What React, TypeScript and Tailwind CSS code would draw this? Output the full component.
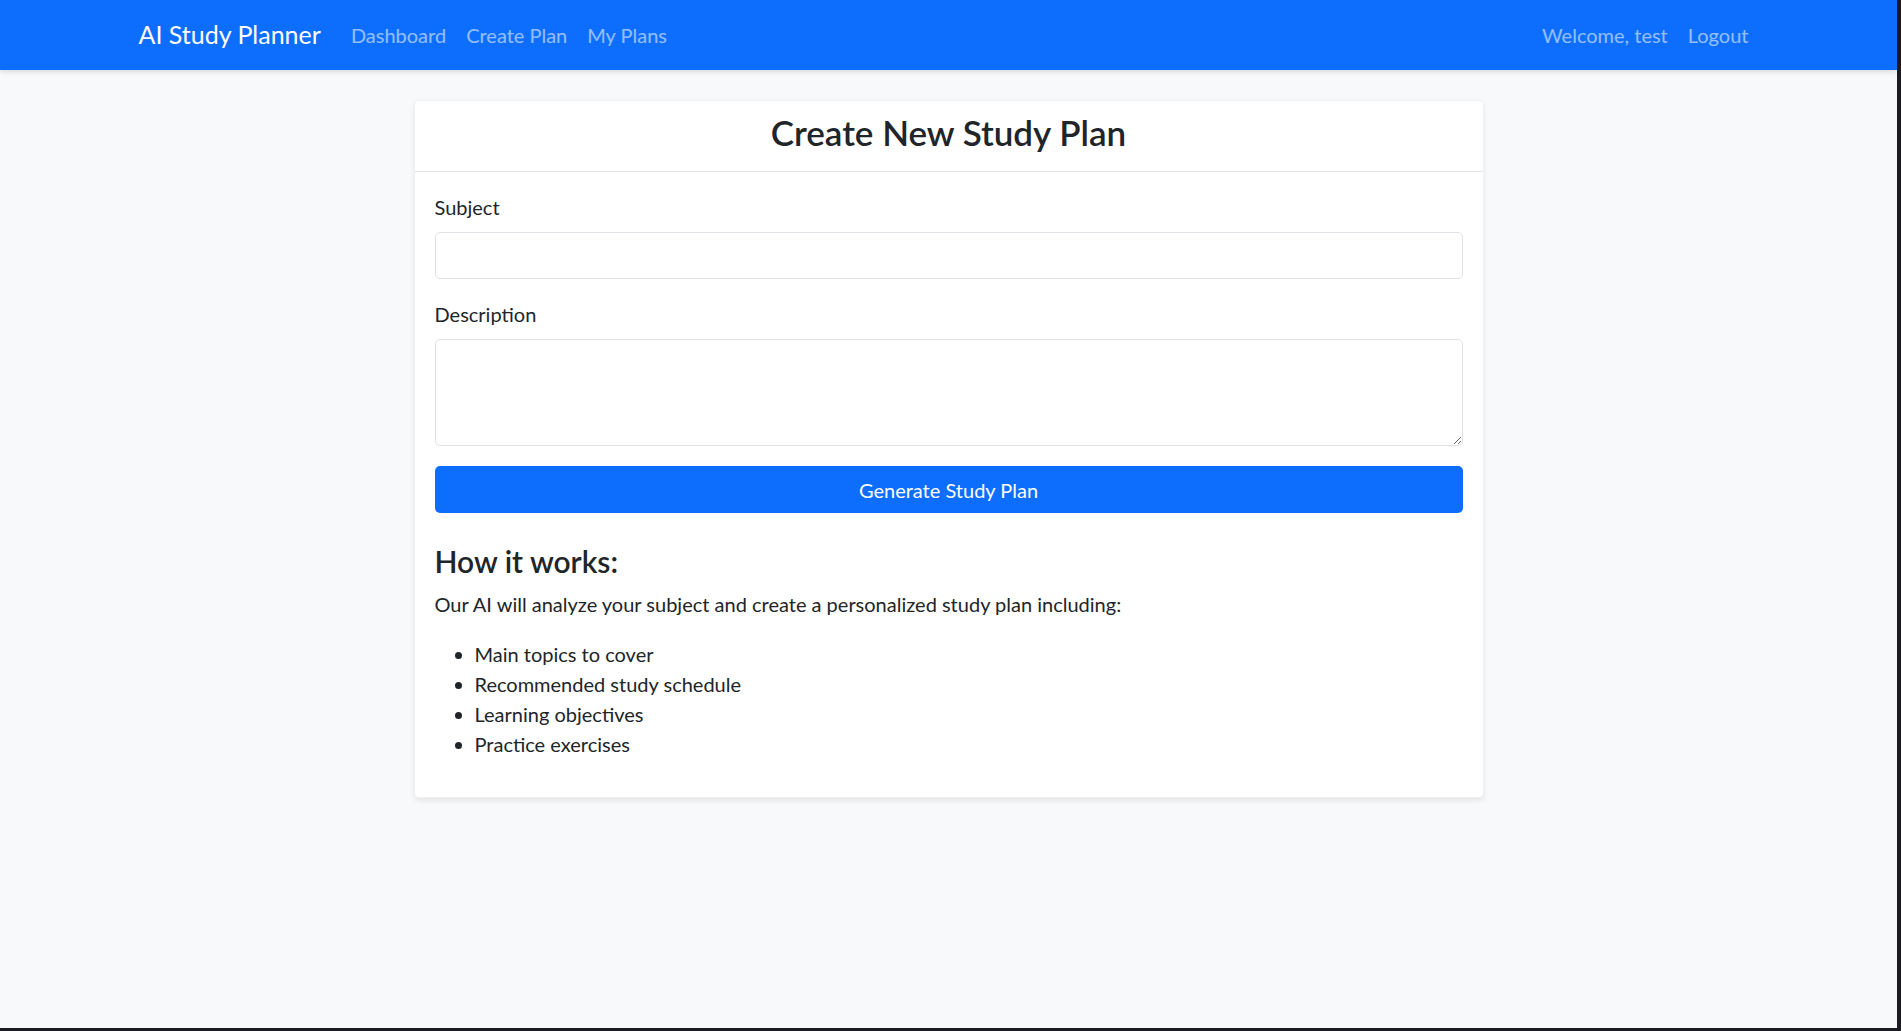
export default function App() {
  const items = ["Main topics to cover", "Recommended study schedule", "Learning objectives", "Practice exercises"];

  return (
    <div className="flex min-h-[1031px] bg-[#1c1b22] font-['Lato',sans-serif] text-[20px] leading-[30px] text-[#212529]">
      <div className="flex-1 bg-[#f8f9fa] mb-[3px]">
        {/* Navbar */}
        <nav className="relative z-10 h-[70px] bg-[#0d6efd] shadow-[0_2px_5px_rgba(0,0,0,0.12)]">
          <div className="mx-auto flex h-full max-w-[1650px] items-center px-[15px]">
            <a className="mr-[20px] text-[25px] leading-[37.5px] text-white">AI Study Planner</a>
            <div className="flex">
              <a className="px-[10px] text-white/55">Dashboard</a>
              <a className="px-[10px] text-white/55">Create Plan</a>
              <a className="px-[10px] text-white/55">My Plans</a>
            </div>
            <div className="ml-auto flex items-center">
              <span className="pr-[10px] text-white/55">Welcome, test</span>
              <a className="px-[10px] text-white/55">Logout</a>
            </div>
          </div>
        </nav>

        {/* Main */}
        <div className="mx-auto mt-[30px] max-w-[1650px] px-[15px]">
          <div className="mx-auto w-[1070px] rounded-[5px] border border-black/[0.06] bg-white shadow-[0_2.5px_5px_rgba(0,0,0,0.075)]">
            <div className="border-b border-[#e3e3e3] px-[20px] pt-[10px] pb-[18px]">
              <h3 className="text-center text-[35px] font-semibold leading-[42px]">Create New Study Plan</h3>
            </div>
            <div className="p-[20px] pb-[18px]">
              <div className="mb-[20px]">
                <label className="mb-[10px] block">Subject</label>
                <input className="block h-[47px] w-full rounded-[5px] border border-[#dee2e6] px-[15px] outline-none" />
              </div>
              <div className="mb-[20px]">
                <label className="mb-[10px] block">Description</label>
                <textarea rows={3} className="block h-[107px] w-full resize-y rounded-[5px] border border-[#dee2e6] px-[15px] py-[7px] outline-none" />
              </div>
              <button className="block h-[47px] w-full rounded-[5px] bg-[#0d6efd] text-white">Generate Study Plan</button>

              <div className="mt-[30px]">
                <h4 className="mb-[10px] text-[30px] font-semibold leading-[36px]">How it works:</h4>
                <p className="mb-[20px]">Our AI will analyze your subject and create a personalized study plan including:</p>
                <ul className="mb-[20px] list-disc pl-[40px]">
                  {items.map((t) => (
                    <li key={t}>{t}</li>
                  ))}
                </ul>
              </div>
            </div>
          </div>
        </div>
      </div>
      <div className="w-[4px]" />
    </div>
  );
}
